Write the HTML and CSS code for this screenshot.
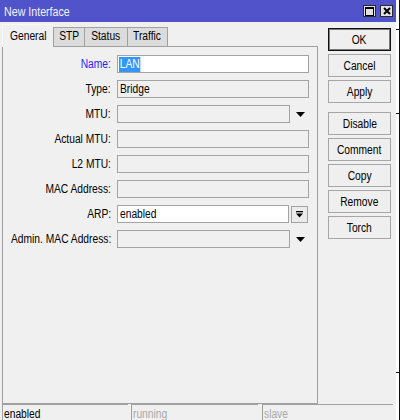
FILE: index.html
```html
<!DOCTYPE html>
<html>
<head>
<meta charset="utf-8">
<link rel="stylesheet" href="styles.css">
</head>
<body>
<div class="screen">
  <div class="window">
    <div class="titlebar">
      <span class="title"><span class="tx">New Interface</span></span>
      <div class="tb-btns">
        <span class="tb-btn"><svg width="9" height="9" viewBox="0 0 9 9"><rect x="0.5" y="0.5" width="8" height="8" fill="none" stroke="#000"/><line x1="0" y1="1" x2="9" y2="1" stroke="#000" stroke-width="2"/></svg></span>
        <span class="tb-btn"><svg width="8" height="8" viewBox="0 0 8 8"><path d="M1 1L7 7M7 1L1 7" stroke="#000" stroke-width="2"/></svg></span>
      </div>
    </div>
    <div class="main">
      <div class="left">
        <div class="tabs">
          <div class="tab active"><span class="tx">General</span></div>
          <div class="tab t-stp"><span class="tx">STP</span></div>
          <div class="tab t-status"><span class="tx">Status</span></div>
          <div class="tab t-traffic"><span class="tx">Traffic</span></div>
          <div class="tab-fill"></div>
        </div>
        <div class="panel">
          <div class="row">
            <span class="lbl blue"><span class="tx">Name:</span></span>
            <div class="field white"><span class="tx sel">LAN</span></div>
          </div>
          <div class="row">
            <span class="lbl"><span class="tx">Type:</span></span>
            <div class="field"><span class="tx">Bridge</span></div>
          </div>
          <div class="row">
            <span class="lbl"><span class="tx">MTU:</span></span>
            <div class="field short"></div>
            <span class="arrow"><svg width="9" height="5" viewBox="0 0 9 5"><polygon points="0,0 9,0 4.5,5" fill="#000"/></svg></span>
          </div>
          <div class="row">
            <span class="lbl"><span class="tx">Actual MTU:</span></span>
            <div class="field"></div>
          </div>
          <div class="row">
            <span class="lbl"><span class="tx">L2 MTU:</span></span>
            <div class="field"></div>
          </div>
          <div class="row">
            <span class="lbl"><span class="tx">MAC Address:</span></span>
            <div class="field"></div>
          </div>
          <div class="row">
            <span class="lbl"><span class="tx">ARP:</span></span>
            <div class="field white shorter"><span class="tx">enabled</span></div>
            <span class="mini-btn"><svg width="7" height="7" viewBox="0 0 7 7"><rect x="0" y="0" width="7" height="1.3" fill="#000"/><polygon points="0,2.5 7,2.5 3.5,6.5" fill="#000"/></svg></span>
          </div>
          <div class="row">
            <span class="lbl"><span class="tx">Admin. MAC Address:</span></span>
            <div class="field short"></div>
            <span class="arrow"><svg width="9" height="5" viewBox="0 0 9 5"><polygon points="0,0 9,0 4.5,5" fill="#000"/></svg></span>
          </div>
        </div>
      </div>
      <div class="buttons">
        <div class="btn default"><span class="tx">OK</span></div>
        <div class="btn"><span class="tx">Cancel</span></div>
        <div class="btn"><span class="tx">Apply</span></div>
        <div class="btn sep"><span class="tx">Disable</span></div>
        <div class="btn"><span class="tx">Comment</span></div>
        <div class="btn"><span class="tx">Copy</span></div>
        <div class="btn"><span class="tx">Remove</span></div>
        <div class="btn"><span class="tx">Torch</span></div>
      </div>
    </div>
    <div class="statusbar">
      <div class="seg s1"><span class="tx">enabled</span></div>
      <div class="seg s2 dim"><span class="tx">running</span></div>
      <div class="seg s3 dim"><span class="tx">slave</span></div>
    </div>
  </div>
  <div class="edge">
    <div class="gap g1"></div>
    <div class="tick"></div>
    <div class="gap g2"></div>
    <div class="tick"></div>
    <div class="gap g3"></div>
    <div class="tick"></div>
  </div>
</div>
</body>
</html>
```

FILE: styles.css
```css
* { box-sizing: border-box; }

body {
  margin: 0;
  background: #fff;
  font-family: "Liberation Sans", Arial, sans-serif;
  font-size: 12.5px;
  color: #000;
}

/* the UI font of the reference is a narrow face; Liberation Sans is condensed to match */
.tx {
  display: inline-block;
  transform: scaleX(0.82);
  transform-origin: left center;
  white-space: nowrap;
}

.screen {
  display: flex;
  width: 400px;
  height: 420px;
  overflow: hidden;
}

.window {
  width: 396px;
  height: 420px;
  flex: none;
  background: #f0f0f0;
  display: flex;
  flex-direction: column;
  overflow: hidden;
}

.titlebar {
  height: 22px;
  flex: none;
  background: #5053ca;
  display: flex;
  align-items: center;
  padding: 0 3px 0 4px;
}

.title {
  flex: 1;
  color: #f4f4ff;
  font-size: 13px;
}

.tb-btns {
  display: flex;
  gap: 4px;
}

.tb-btn {
  width: 13px;
  height: 12px;
  background: #e2e2e2;
  border: 1px solid #2a2a2a;
  display: flex;
  align-items: center;
  justify-content: center;
}

.main {
  height: 382px;
  flex: none;
  display: flex;
}

.left {
  margin: 2px 0 0 2px;
  width: 316px;
  display: flex;
  flex-direction: column;
}

.tabs {
  height: 23px;
  display: flex;
  align-items: flex-end;
}

.tab {
  height: 20px;
  display: flex;
  align-items: center;
  justify-content: center;
  padding-bottom: 2px;
  background: #dcdcdc;
  border-top: 1px solid #a0a0a0;
  border-left: 1px solid #a0a0a0;
  border-bottom: 1px solid #a0a0a0;
}

.tab .tx { transform-origin: center center; }

.tab.active {
  width: 51px;
  height: 23px;
  padding-bottom: 1px;
  background: #f0f0f0;
  border-top: 1px solid #f8f8f8;
  border-left: 1px solid #f8f8f8;
  border-bottom: none;
}

.t-stp { width: 31px; }
.t-status { width: 43px; }
.t-traffic { width: 41px; border-right: 1px solid #a0a0a0; }

.tab-fill {
  flex: 1;
  border-bottom: 1px solid #a0a0a0;
}

.panel {
  flex: 1;
  border: 1px solid #a0a0a0;
  border-top: none;
  padding: 8px 7px 0 0;
  display: flex;
  flex-direction: column;
  gap: 7px;
}

.row {
  height: 18px;
  display: flex;
  align-items: center;
}

.lbl {
  width: 108px;
  flex: none;
  display: flex;
  justify-content: flex-end;
  margin-right: 6px;
  white-space: nowrap;
}

.lbl .tx { transform-origin: right center; flex: none; }

.lbl.blue { color: #1f1fff; }

.field {
  width: 192px;
  height: 18px;
  flex: none;
  border: 1px solid #a3a3a3;
  background: #f0f0f0;
  padding-left: 2px;
  display: flex;
  align-items: center;
  white-space: nowrap;
  overflow: hidden;
}

.field.white { background: #fff; }
.field.short { width: 173px; }
.field.shorter { width: 172px; margin-right: 2px; }

.tx.sel {
  background: #3297fd;
  color: #fff;
  padding: 0 1px;
  margin-left: -1px;
  line-height: 15px;
}

.arrow {
  width: 19px;
  display: flex;
  justify-content: center;
  padding-left: 1px;
}

.mini-btn {
  width: 17px;
  height: 17px;
  border: 1px solid #a3a3a3;
  background: #ececec;
  display: flex;
  align-items: center;
  justify-content: center;
}

.buttons {
  margin: 6px 0 0 10px;
  width: 63px;
  display: flex;
  flex-direction: column;
  gap: 3px;
}

.btn {
  height: 23px;
  border: 1px solid #a6a6a6;
  background: #efefef;
  display: flex;
  align-items: center;
  justify-content: center;
}

.btn .tx { transform-origin: center center; }

.btn.default {
  border: 1px solid #111;
  box-shadow: inset 0 0 0 1px #7a7a7a;
}

.btn.sep { margin-top: 6px; }

.statusbar {
  height: 16px;
  flex: none;
  display: flex;
  padding-left: 2px;
}

.seg {
  height: 16px;
  border-top: 1px solid #a0a0a0;
  border-left: 1px solid #a0a0a0;
  padding: 1px 0 0 1px;
  line-height: 16px;
  white-space: nowrap;
}

.s1 { width: 126px; }
.s2 { width: 127px; margin-left: 3px; }
.s3 { width: 131px; margin-left: 4px; }

.dim { color: #a8a8a8; }

.edge {
  width: 4px;
  flex: none;
  background: #fff;
  border-right: 1px solid #111;
  display: flex;
  flex-direction: column;
}

.gap { flex: none; }
.g1 { height: 29px; }
.g2 { height: 83px; }
.g3 { height: 258px; }

.tick {
  height: 1px;
  background: #111;
}
```
